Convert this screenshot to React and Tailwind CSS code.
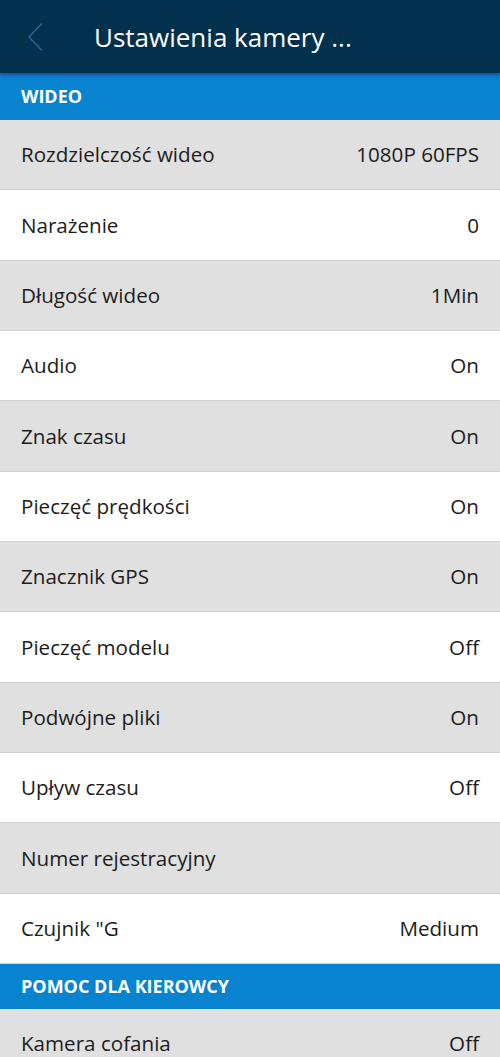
const videoRows = [
  ['Rozdzielczość wideo', '1080P 60FPS'],
  ['Narażenie', '0'],
  ['Długość wideo', '1Min'],
  ['Audio', 'On'],
  ['Znak czasu', 'On'],
  ['Pieczęć prędkości', 'On'],
  ['Znacznik GPS', 'On'],
  ['Pieczęć modelu', 'Off'],
  ['Podwójne pliki', 'On'],
  ['Upływ czasu', 'Off'],
  ['Numer rejestracyjny', ''],
  ['Czujnik "G', 'Medium'],
];

const driverRows = [['Kamera cofania', 'Off']];

function SectionHeader({ title, tall }) {
  return (
    <div
      className={`flex items-center bg-[#0883cf] px-[21px] text-[18px] font-bold text-white ${
        tall ? 'h-[47px]' : 'h-[45px]'
      }`}
    >
      {title}
    </div>
  );
}

function Row({ label, value, index }) {
  return (
    <div
      className={`flex h-[70.33px] items-center justify-between border-b border-[#d2d2d2] px-[21px] text-[20.6px] text-[#1c1c1c] ${
        index % 2 === 0 ? 'bg-[#e0e0e0]' : 'bg-white'
      }`}
    >
      <span>{label}</span>
      <span>{value}</span>
    </div>
  );
}

export default function App() {
  return (
    <div
      className="h-[1057px] w-[500px] overflow-hidden bg-white"
      style={{ fontFamily: '"Open Sans", "Noto Sans", sans-serif' }}
    >
      <div className="relative z-10 flex h-[73px] items-center bg-[#03304d] shadow-[0_2px_3px_rgba(40,30,120,0.6)]">
        <div className="flex w-[94px] items-center pl-[27px]">
          <svg width="17" height="30" viewBox="0 0 17 30" fill="none">
            <path d="M15 1.5 L2 15 L15 28.5" stroke="#1e6496" strokeWidth="1.6" />
          </svg>
        </div>
        <span className="text-[26px] leading-none text-white">Ustawienia kamery ...</span>
      </div>

      <SectionHeader title="WIDEO" tall />
      {videoRows.map(([label, value], i) => (
        <Row key={label} label={label} value={value} index={i} />
      ))}

      <SectionHeader title="POMOC DLA KIEROWCY" />
      {driverRows.map(([label, value], i) => (
        <Row key={label} label={label} value={value} index={i} />
      ))}
    </div>
  );
}
